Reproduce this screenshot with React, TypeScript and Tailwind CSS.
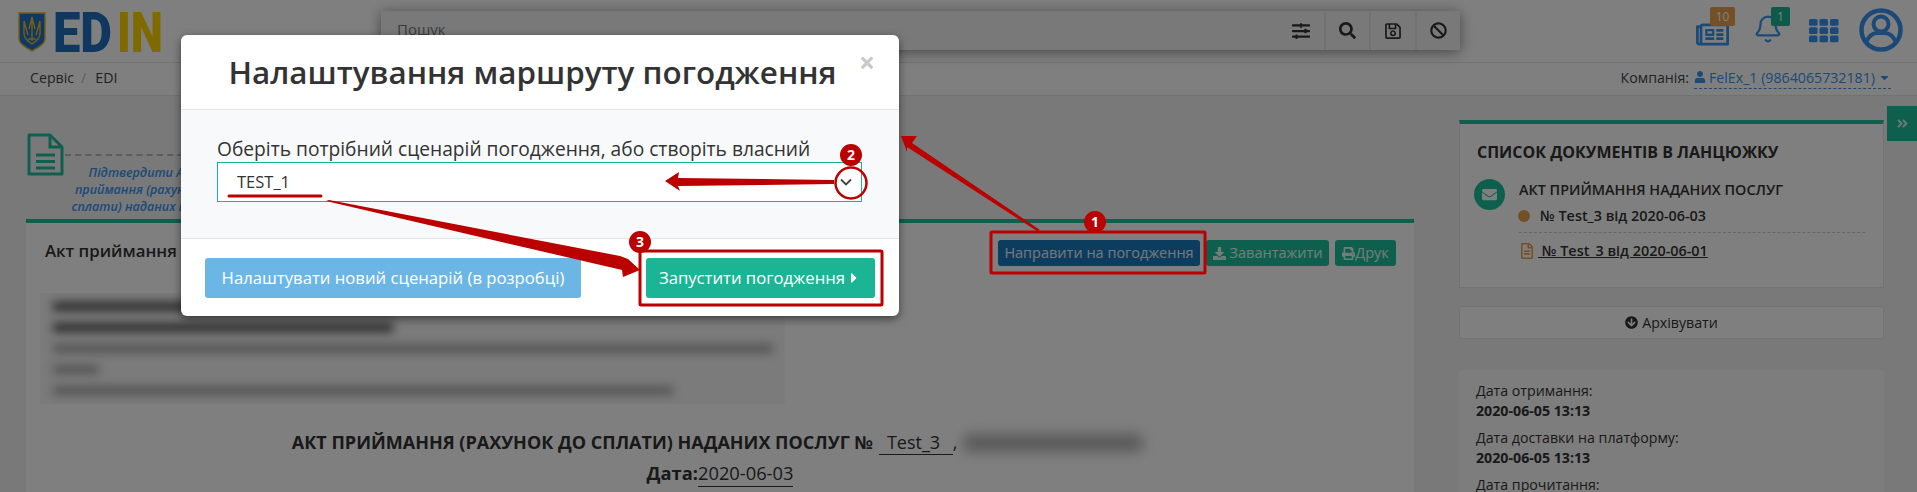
import React from "react";
import {
  FaSearch, FaRegSave, FaBan, FaDownload, FaPrint, FaUser, FaCaretDown, FaCaretRight,
  FaArrowCircleDown, FaEnvelope, FaRegFileAlt, FaAngleDoubleRight, FaRegNewspaper, FaSlidersH,
} from "react-icons/fa";
import { Bell } from "lucide-react";

function Logo() {
  return (
    <svg width="150" height="42" viewBox="0 0 150 42" className="block">
      <path d="M1 2 H27 V28 C27 33 20 37 14 40 C8 37 1 33 1 28 Z" fill="#2070c8" stroke="#e8bd20" strokeWidth="1.5" />
      <path d="M14 6 V30 M6 10 V22 C6 28 10 30 14 33 C18 30 22 28 22 22 V10 M6 10 L10 24 M22 10 L18 24 M10 28 H18 M14 6 L11 18 M14 6 L17 18" fill="none" stroke="#e8bd20" strokeWidth="1.4" />
      <text x="35" y="41" fontFamily="Roboto, sans-serif" fontWeight="900" fontSize="56" fill="#1f6fc0" textLength="59" lengthAdjust="spacingAndGlyphs">ED</text>
      <text x="99" y="41" fontFamily="Roboto, sans-serif" fontWeight="900" fontSize="56" fill="#ffd400" textLength="46" lengthAdjust="spacingAndGlyphs">IN</text>
    </svg>
  );
}

function Header() {
  return (
    <header className="flex h-[63px] items-center border-b border-[#e5e5e5] bg-white">
      <div className="w-[381px] pl-[18px] pt-[1px]"><Logo /></div>
      <div className="flex h-[39px] w-[1079px] items-stretch self-start mt-[11px] bg-[#f3f3f4] shadow-[0_2px_14px_rgba(0,0,0,0.45)]">
        <div className="flex-1 pl-[16px] pt-[7px] text-[15px] text-[#777]">Пошук</div>
        <div className="flex w-[46px] items-center justify-center text-[#333]"><FaSlidersH size={18} /></div>
        <div className="flex w-[45px] items-center justify-center border-l-2 border-[#e4e4e4] text-[#333]"><FaSearch size={17} /></div>
        <div className="flex w-[46px] items-center justify-center border-l-2 border-[#e4e4e4] text-[#333]"><FaRegSave size={18} /></div>
        <div className="flex w-[45px] items-center justify-center border-l-2 border-[#e4e4e4] text-[#333]"><FaBan size={17} /></div>
      </div>
      <div className="ml-[236px] flex items-start self-start">
        <div className="relative mt-[18px] text-[#3694f0]">
          <FaRegNewspaper size={33} />
          <span className="absolute -top-[11px] left-[14px] flex h-[19px] w-[25px] items-center justify-center rounded-[2px] bg-[#e8a04c] text-[12px] text-white">10</span>
        </div>
        <div className="relative ml-[24px] mt-[14px] text-[#3694f0]">
          <Bell size={30} strokeWidth={1.8} />
          <span className="absolute -top-[7px] left-[18px] flex h-[19px] w-[19px] items-center justify-center rounded-[2px] bg-[#1ab394] text-[12px] text-white">1</span>
        </div>
        <svg width="30" height="24" viewBox="0 0 30 24" className="ml-[26px] mt-[19px]" fill="#3694f0">
          {[0, 1, 2].map((r) => [0, 1, 2].map((c) => <rect key={`${r}${c}`} x={c * 10.5} y={r * 8.2} width="8.5" height="6.8" rx="1.5" />))}
        </svg>
        <svg width="44" height="44" viewBox="0 0 44 44" className="ml-[20px] mt-[8px]">
          <circle cx="22" cy="22" r="19.5" fill="#fff" stroke="#3694f0" strokeWidth="4.5" />
          <circle cx="22" cy="16" r="7.5" fill="none" stroke="#3694f0" strokeWidth="4" />
          <path d="M7 35 C9 28 14 25 18 25 H26 C30 25 35 28 37 35" fill="none" stroke="#3694f0" strokeWidth="4" />
        </svg>
      </div>
    </header>
  );
}

function Breadcrumb() {
  return (
    <div className="flex h-[33px] items-center border-b border-[#e5e5e5] bg-white pb-[2px] pl-[30px] pr-[26px] text-[14.2px] text-[#444]">
      <span>Сервіс</span>
      <span className="ml-[7px] text-[#bbb]">/</span>
      <span className="ml-[9px]">EDI</span>
      <span className="ml-auto">Компанія:</span>
      <span className="ml-[5px] flex items-center border-b border-dashed border-[#3694f0] text-[#3694f0]">
        <FaUser size={12} className="mr-[3px]" />
        FelEx_1 (9864065732181)
        <FaCaretDown size={13} className="ml-[3px]" />
      </span>
    </div>
  );
}

function Stepper() {
  return (
    <div className="h-[123px] pt-[37px]">
      <div className="flex items-start">
        <svg width="37" height="43" viewBox="0 0 37 43" fill="none" stroke="#1fbf9f" strokeWidth="3" className="ml-[1px]">
          <path d="M2 2 H23 L35 14 V41 H2 Z" strokeLinejoin="round" />
          <path d="M23 2 V14 H35" />
          <path d="M9 22 H28 M9 28.5 H28 M9 35 H28" />
        </svg>
        <div className="ml-[1px] mt-[21px] h-0 w-[200px] border-t-2 border-dashed border-[#bbb]" />
      </div>
      <div className="ml-[19px] -mt-[12px] w-[200px] text-center text-[12.5px] italic font-semibold leading-[17px] text-[#3694f0]">
        Підтвердити Акт<br />приймання (рахунку до<br />сплати) наданих послуг
      </div>
    </div>
  );
}

function Btn({ w, bg, children }: { w: string; bg: string; children: React.ReactNode }) {
  return <div className={`flex h-[26px] items-center justify-center rounded-[3px] text-[14.5px] text-white/90 ${w} ${bg}`}>{children}</div>;
}

function Bar({ w, dark }: { w: string; dark?: boolean }) {
  return <div className={`h-[9px] blur-[5px] ${w} ${dark ? "bg-[#555]" : "bg-[#aaa]"}`} />;
}

function Main() {
  return (
    <main className="w-[1388px]">
      <Stepper />
      <div className="h-[300px] border-t-4 border-[#1fbf9f] bg-white">
        <div className="flex items-start pl-[19px] pr-[18px] pt-[17px]">
          <span className="-mt-[2px] text-[16.8px] font-semibold text-[#333]">Акт приймання</span>
          <div className="ml-auto flex gap-[6px]">
            <Btn w="w-[202px]" bg="bg-[#1a7bbd]">Направити на погодження</Btn>
            <Btn w="w-[123px]" bg="bg-[#1fbf9f]"><FaDownload size={13} className="mr-[4px]" />Завантажити</Btn>
            <Btn w="w-[61px]" bg="bg-[#1fbf9f]"><FaPrint size={13} />Друк</Btn>
          </div>
        </div>
        <div className="ml-[14px] mt-[27px] flex h-[111px] w-[745px] flex-col gap-[12px] bg-[#f6f6f6] pl-[13px] pt-[9px]">
          <Bar w="w-[340px]" dark />
          <Bar w="w-[340px]" dark />
          <Bar w="w-[720px]" />
          <Bar w="w-[46px]" />
          <Bar w="w-[620px]" />
        </div>
        <div className="mt-[26px] pr-[6px] text-center text-[18px] leading-[24px] text-[#333]">
          <span className="font-bold">АКТ ПРИЙМАННЯ (РАХУНОК ДО СПЛАТИ) НАДАНИХ ПОСЛУГ №</span>
          <span className="ml-[6px] border-b border-[#333] px-[8px]">Test_3 </span>
          <span>, </span>
          <span className="ml-[2px] inline-block h-[16px] w-[178px] bg-[#aaa] align-[-2px] blur-[7px]" />
        </div>
        <div className="mt-[7px] text-center text-[18.3px] leading-[24px] text-[#333]">
          <span className="font-bold">Дата:</span>
          <span className="border-b border-[#333] pb-[1px]">2020-06-03</span>
        </div>
      </div>
    </main>
  );
}

function Side() {
  return (
    <aside className="ml-[45px] w-[425px] pt-[24px] text-[14.2px] text-[#333]">
      <div className="h-[168px] border-x border-b border-t-4 border-x-[#e7e7e7] border-b-[#e7e7e7] border-t-[#1fbf9f] bg-white pl-[17px] pr-[18px] pt-[16px]">
        <div className="text-[16px] font-bold leading-[24px]">СПИСОК ДОКУМЕНТІВ В ЛАНЦЮЖКУ</div>
        <div className="mt-[16px] flex">
          <div className="-mt-[1px] -ml-[3px] flex h-[31px] w-[31px] shrink-0 items-center justify-center rounded-full bg-[#1fbf9f] text-white">
            <FaEnvelope size={15} />
          </div>
          <div className="ml-[14px] flex-1">
            <div className="text-[14.4px] font-semibold leading-[20px]">АКТ ПРИЙМАННЯ НАДАНИХ ПОСЛУГ</div>
            <div className="mt-[6px] flex items-center border-b border-dashed border-[#ccc] pb-[6px] text-[14.4px] font-semibold leading-[20px]">
              <span className="ml-[-1px] mr-[10px] h-[12px] w-[12px] rounded-full bg-[#e8a04c]" />
              № Test_3 від 2020-06-03
            </div>
            <div className="mt-[8px] flex items-center text-[14.4px] font-semibold leading-[20px]">
              <FaRegFileAlt size={16} className="mr-[3px] text-[#e8a04c]" />
              <span className="underline">&nbsp;№ Test_3 від 2020-06-01</span>
            </div>
          </div>
        </div>
      </div>
      <div className="mt-[18px] flex h-[33px] items-center justify-center rounded-[3px] border border-[#e7e7e7] bg-white">
        <FaArrowCircleDown size={13} className="mr-[4px]" />Архівувати
      </div>
      <div className="mt-[31px] h-[130px] rounded-[4px] bg-[#fafafa] pl-[17px] pt-[11px] leading-[20px]">
        <div>Дата отримання:</div>
        <div className="font-bold">2020-06-05 13:13</div>
        <div className="mt-[7px]">Дата доставки на платформу:</div>
        <div className="font-bold">2020-06-05 13:13</div>
        <div className="mt-[7px]">Дата прочитання:</div>
      </div>
    </aside>
  );
}

function Modal() {
  return (
    <div className="absolute left-[181px] top-[35px] w-[718px] overflow-hidden rounded-[6px] bg-white shadow-[0_3px_9px_rgba(0,0,0,0.5)]">
      <div className="relative flex h-[75px] items-center justify-center border-b border-[#e5e5e5] pr-[15px]">
        <h1 className="text-[31.4px] font-semibold text-[#333]">Налаштування маршруту погодження</h1>
        <span className="absolute right-[24px] top-[13px] text-[28px] font-bold leading-[28px] text-[#c8c8c8]">×</span>
      </div>
      <div className="h-[129px] border-b border-[#e5e5e5] bg-[#f8f9fb] pl-[36px] pt-[26px]">
        <div className="text-[19.2px] leading-[26px] text-[#333]">Оберіть потрібний сценарій погодження, або створіть власний</div>
        <div className="flex h-[40px] w-[645px] items-center justify-between border border-[#1ab394] bg-white pl-[19px] pr-[2px] text-[16.5px] text-[#333]">
          <span>TEST_1</span>
          <svg width="26" height="26" viewBox="0 0 26 26" fill="none" stroke="#444" strokeWidth="1.8"><path d="M8 10.5 L13 15.5 L18 10.5" /></svg>
        </div>
      </div>
      <div className="flex h-[77px] items-start justify-between px-[24px] pt-[19px] text-[16.7px] text-white">
        <div className="flex h-[40px] w-[376px] items-center justify-center rounded-[3px] bg-[#6cb6e6]">Налаштувати новий сценарій (в розробці)</div>
        <div className="flex h-[40px] w-[229px] items-center justify-center rounded-[3px] bg-[#1bb595]">
          Запустити погодження<FaCaretRight size={16} className="ml-[1px]" />
        </div>
      </div>
    </div>
  );
}

function Badge({ x, y, n }: { x: number; y: number; n: string }) {
  return (
    <g>
      <circle cx={x} cy={y} r="11" fill="#bb0000" />
      <text x={x} y={y + 5} textAnchor="middle" fontFamily="'Open Sans', sans-serif" fontWeight="700" fontSize="14" fill="#fff">{n}</text>
    </g>
  );
}

function Annotations() {
  const red = "#bb0000";
  return (
    <svg width="1917" height="492" viewBox="0 0 1917 492" className="pointer-events-none absolute left-0 top-0">
      <rect x="991" y="232" width="214" height="41" fill="none" stroke={red} strokeWidth="3" rx="1" />
      <rect x="640" y="251" width="242" height="54" fill="none" stroke={red} strokeWidth="3" rx="1" />
      <ellipse cx="851" cy="183" rx="15.5" ry="15.5" fill="none" stroke={red} strokeWidth="2.5" />
      <path d="M229 196 H321" stroke={red} strokeWidth="3" strokeLinecap="round" />
      <polygon points="901,136 917,136 912,143 1040,230 1037,231 907,147 907,152" fill={red} />
      <polygon points="665,181 679,172 678,178 834,180 834,184 678,186 680,191" fill={red} />
      <polygon points="326,201 329,200 620,256 628,259 640,270 623,277 622,270" fill={red} />
      <Badge x={1095} y={222} n="1" />
      <Badge x={851} y={155} n="2" />
      <Badge x={640} y={242} n="3" />
    </svg>
  );
}

export default function App() {
  return (
    <div className="relative h-[492px] w-[1917px] overflow-hidden bg-[#f3f3f4] font-['Open_Sans',sans-serif]">
      <Header />
      <Breadcrumb />
      <div className="flex pl-[26px]">
        <Main />
        <Side />
        <div className="ml-[3px] mt-[10px] flex h-[35px] w-[30px] items-center justify-center bg-[#1fbf9f] text-white/80">
          <FaAngleDoubleRight size={13} />
        </div>
      </div>
      <div className="absolute inset-0 bg-black/50" />
      <Modal />
      <Annotations />
    </div>
  );
}
